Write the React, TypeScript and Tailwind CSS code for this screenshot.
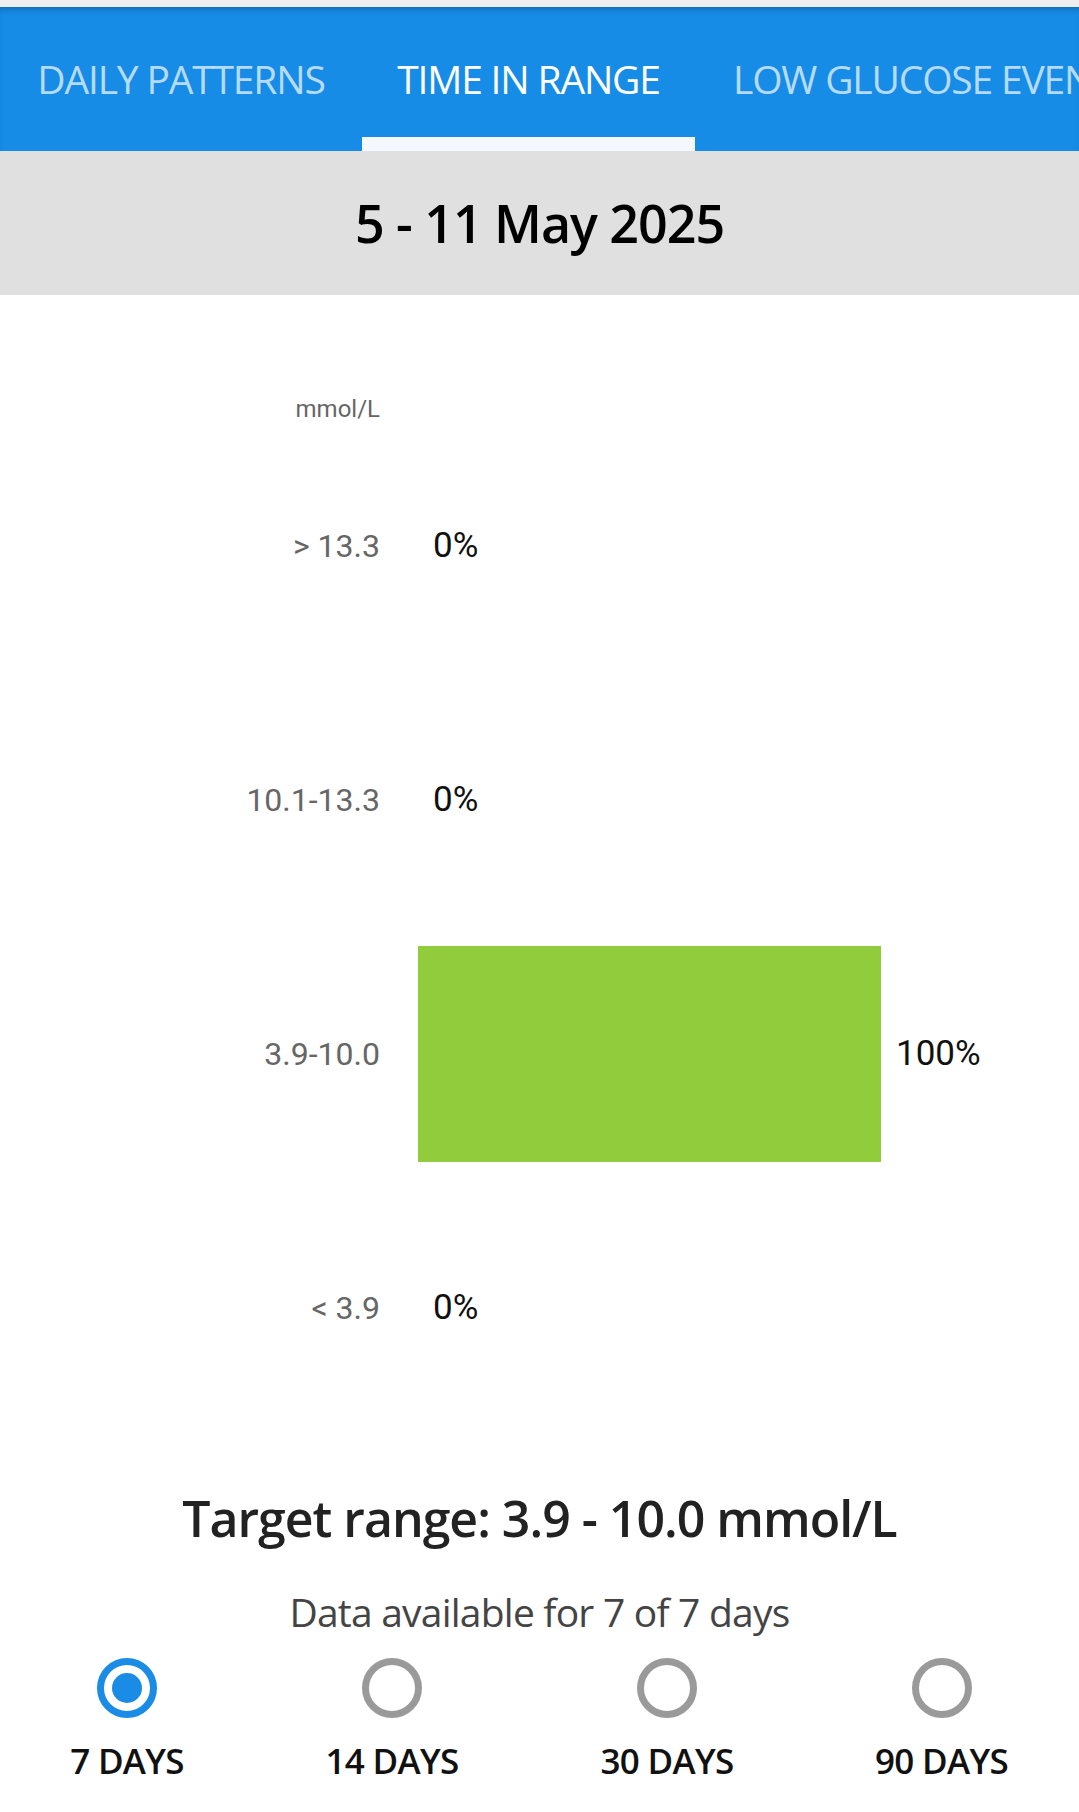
import { useState } from "react";

const rows = [
  { label: "> 13.3", pct: 0 },
  { label: "10.1-13.3", pct: 0 },
  { label: "3.9-10.0", pct: 100 },
  { label: "< 3.9", pct: 0 },
];

const periods = ["7 DAYS", "14 DAYS", "30 DAYS", "90 DAYS"];

function Radio({ on }: { on: boolean }) {
  return (
    <div
      className={
        "w-[60px] h-[60px] rounded-full border-[7px] flex items-center justify-center " +
        (on ? "border-[#1a8ce6]" : "border-[#9a9a9a]")
      }
    >
      {on && <div className="w-[30px] h-[30px] rounded-full bg-[#1a8ce6]" />}
    </div>
  );
}

export default function App() {
  const [period, setPeriod] = useState(0);

  return (
    <div className="w-[1079px] h-[1812px] bg-white overflow-hidden font-['Open_Sans',sans-serif]">
      <div className="h-[7px] bg-[#eeeeee]" />

      {/* tabs */}
      <div className="relative h-[144px] bg-[#168ce6] flex shadow-[inset_0_6px_6px_-4px_rgba(0,0,0,0.25)] text-[39px] tracking-[-0.03em] whitespace-nowrap">
        <div className="w-[362px] shrink-0 flex items-center justify-center text-white/70">DAILY PATTERNS</div>
        <div className="relative w-[333px] shrink-0 flex items-center justify-center text-white">
          TIME IN RANGE
          <div className="absolute left-0 right-0 bottom-0 h-[14px] bg-[#f5f9ff]" />
        </div>
        <div className="flex-1 flex items-center pl-[38px] text-white/70 overflow-hidden">LOW GLUCOSE EVENTS</div>
      </div>

      {/* date */}
      <div className="h-[144px] bg-[#e0e0e0] flex items-center justify-center">
        <span className="text-[52px] font-semibold text-black tracking-[-0.02em]">5 - 11 May 2025</span>
      </div>

      {/* chart */}
      <div className="pt-[104px] font-['Roboto',sans-serif]">
        <div className="w-[380px] h-[20px] leading-[20px] text-right text-[24px] text-[#666666]">mmol/L</div>
        {rows.map((r) => (
          <div key={r.label} className="h-[254px] flex items-center">
            <div className="w-[380px] shrink-0 text-right text-[32px] text-[#666666]">{r.label}</div>
            <div className="ml-[38px] flex items-center">
              {r.pct > 0 && (
                <div className="h-[216px] bg-[#91cc3d]" style={{ width: (463 * r.pct) / 100 }} />
              )}
              <span className="ml-[15px] text-[35px] text-[#111111]">{r.pct}%</span>
            </div>
          </div>
        ))}
      </div>

      {/* summary */}
      <div className="mt-[53px] h-[60px] flex items-center justify-center text-[50px] font-semibold text-[#222222] tracking-[-0.02em]">
        Target range: 3.9 - 10.0 mmol/L
      </div>
      <div className="mt-[40px] h-[48px] flex items-center justify-center text-[39px] text-[#444444] tracking-[-0.02em]">
        Data available for 7 of 7 days
      </div>

      {/* period picker */}
      <div className="mt-[22px] grid grid-cols-[254px_276px_274px_275px]">
        {periods.map((p, i) => (
          <button key={p} onClick={() => setPeriod(i)} className="flex flex-col items-center">
            <Radio on={period === i} />
            <span className="mt-[21px] h-[44px] flex items-center text-[35px] font-semibold text-[#111111] tracking-[-0.02em]">
              {p}
            </span>
          </button>
        ))}
      </div>
    </div>
  );
}
